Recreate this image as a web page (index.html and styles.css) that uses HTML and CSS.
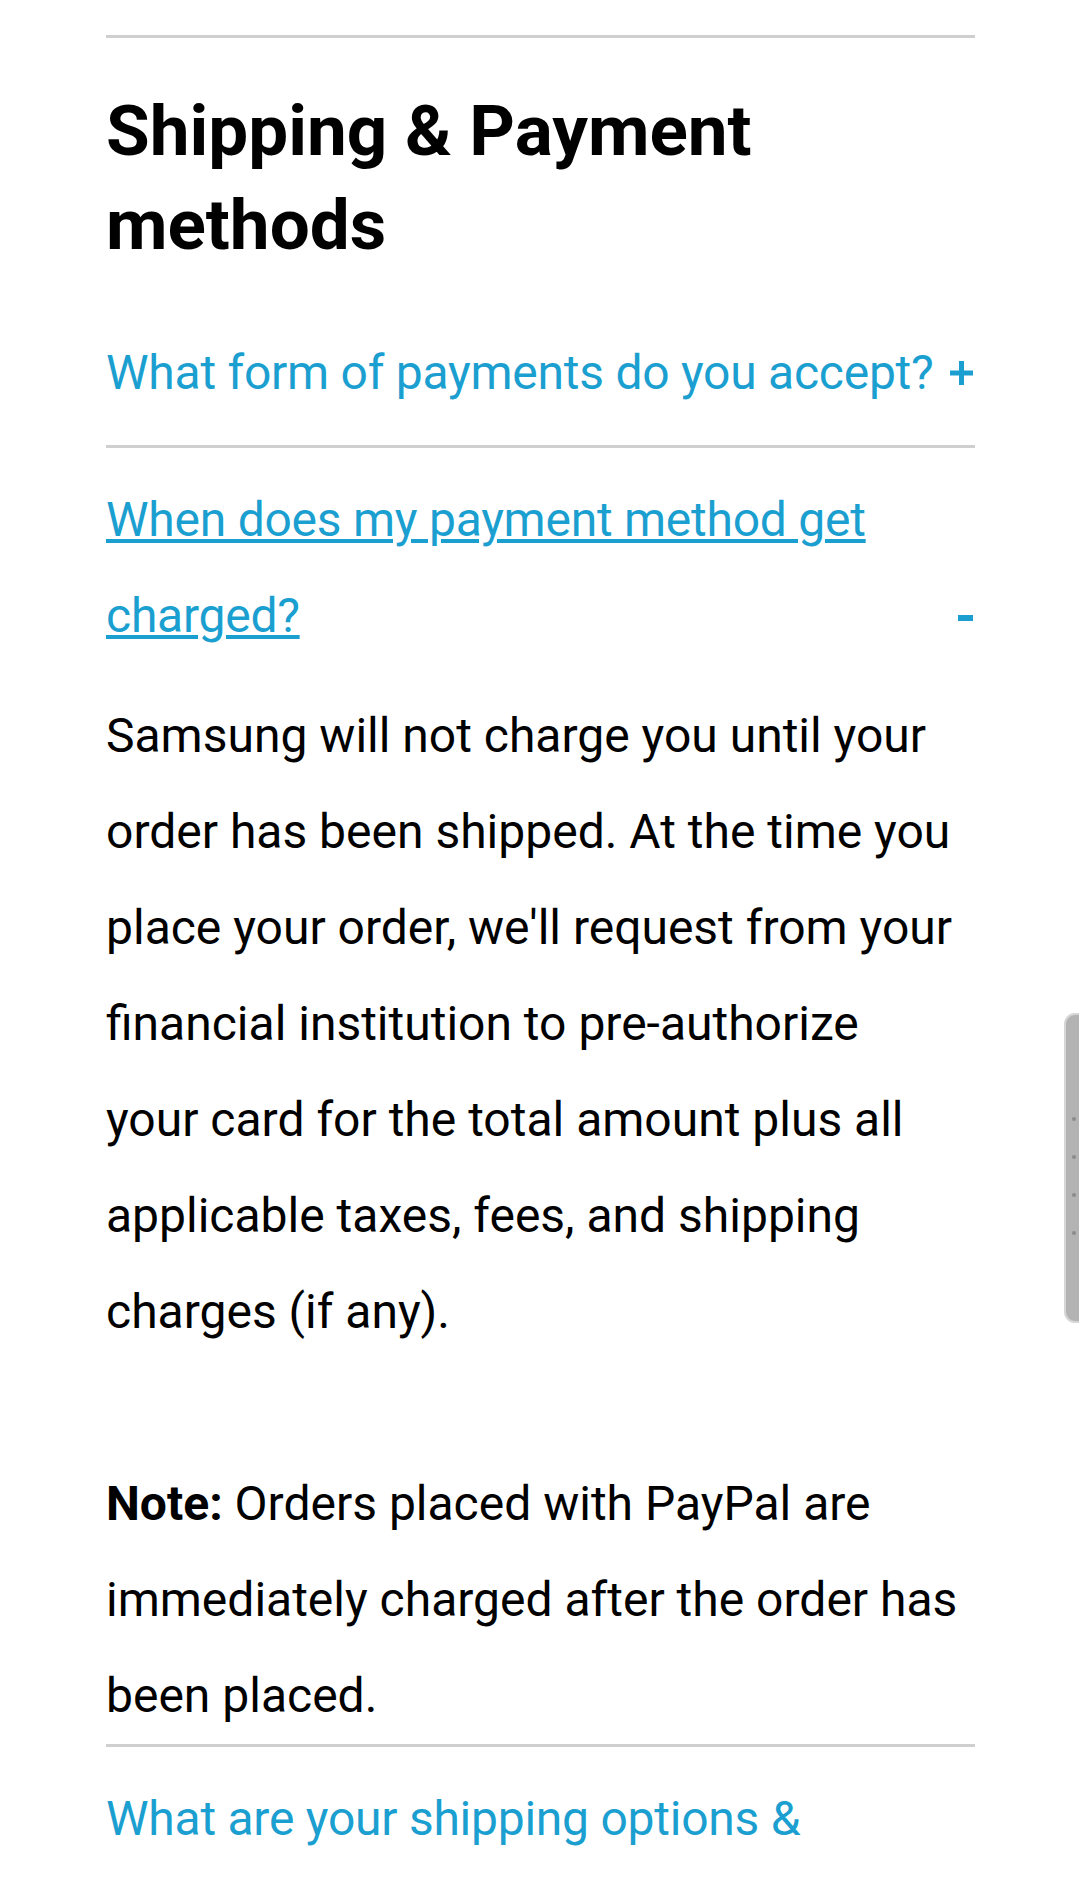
FILE: index.html
```html
<!DOCTYPE html>
<html lang="en">
<head>
<meta charset="utf-8">
<title>Shipping &amp; Payment methods</title>
<link rel="stylesheet" href="styles.css">
</head>
<body>
<main class="page">
  <section class="faq">
    <h2 class="faq-title">Shipping &amp; Payment methods</h2>

    <div class="faq-item faq-item--first">
      <div class="faq-q">
        <a class="faq-link" href="#">What form of payments do you accept?</a>
        <span class="toggle toggle--plus">
          <svg width="23" height="24" viewBox="0 0 23 24"><rect x="9" y="0" width="5" height="24" fill="#1b9fd0"/><rect x="0" y="9.5" width="23" height="5" fill="#1b9fd0"/></svg>
        </span>
      </div>
    </div>

    <div class="faq-item">
      <div class="faq-q">
        <a class="faq-link faq-link--open" href="#">When does my payment method get charged?</a>
        <span class="toggle toggle--minus">
          <svg width="15" height="6" viewBox="0 0 15 6"><rect x="0" y="0" width="15" height="6" fill="#1b9fd0"/></svg>
        </span>
      </div>
      <p class="faq-a">Samsung will not charge you until your order has been shipped. At the time you place your order, we'll request from your financial institution to pre-authorize your card for the total amount plus all applicable taxes, fees, and shipping charges (if any).<br><br><strong>Note:</strong> Orders placed with PayPal are immediately charged after the order has been placed.</p>
    </div>

    <div class="faq-item">
      <div class="faq-q">
        <a class="faq-link" href="#">What are your shipping options &amp; delivery times?</a>
        <span class="toggle toggle--plus">
          <svg width="23" height="24" viewBox="0 0 23 24"><rect x="9" y="0" width="5" height="24" fill="#1b9fd0"/><rect x="0" y="9.5" width="23" height="5" fill="#1b9fd0"/></svg>
        </span>
      </div>
    </div>
  </section>

  <div class="fast-scroll">
    <span class="fast-scroll__dot"></span>
    <span class="fast-scroll__dot"></span>
    <span class="fast-scroll__dot"></span>
    <span class="fast-scroll__dot"></span>
  </div>
</main>
</body>
</html>
```
FILE: styles.css
```css
html, body {
  margin: 0;
  padding: 0;
  background: #ffffff;
}

.page {
  box-sizing: border-box;
  width: 1079px;
  height: 1884px;
  overflow: hidden;
  padding: 35px 104px 0 106px;
  font-family: Roboto, "Noto Sans", sans-serif;
  color: #000000;
}

.faq {
  width: 869px;
  border-top: 3px solid #cfcfcf;
}

.faq-title {
  margin: 46px 0 29px;
  font-size: 71px;
  line-height: 94px;
  font-weight: 700;
  color: #000000;
}

.faq-item {
  border-top: 3px solid #cfcfcf;
}

.faq-item--first {
  border-top: 0;
}

.faq-q {
  display: flex;
  align-items: flex-end;
  padding: 24px 0;
  font-size: 48px;
  line-height: 96px;
}

.faq-link {
  flex: 1;
  color: #1b9fd0;
  letter-spacing: -0.25px;
  text-decoration: none;
}

.faq-link--open {
  text-decoration: underline;
  text-decoration-thickness: 4px;
  text-underline-offset: 3px;
}

.toggle {
  flex: none;
  width: 26px;
  height: 96px;
  box-sizing: border-box;
  padding-right: 2px;
  display: flex;
  justify-content: flex-end;
  align-items: flex-start;
}

.toggle svg {
  display: block;
}

.toggle--plus {
  padding-top: 36px;
}

.toggle--minus {
  padding-top: 47px;
}

.faq-a {
  width: 853px;
  margin: 0;
  font-size: 48px;
  line-height: 96px;
  color: #000000;
}

.faq-a strong {
  font-weight: 700;
}

.fast-scroll {
  position: fixed;
  top: 1013px;
  right: 0;
  width: 15px;
  height: 310px;
  box-sizing: border-box;
  background: #b3b3b3;
  border: 2px solid #d6d6d6;
  border-right: 0;
  border-radius: 11px 0 0 11px;
  display: flex;
  flex-direction: column;
  align-items: center;
  gap: 34px;
  padding: 102px 0 0 2px;
}

.fast-scroll__dot {
  width: 4px;
  height: 4px;
  border-radius: 50%;
  background: #8c8c8c;
}
```
